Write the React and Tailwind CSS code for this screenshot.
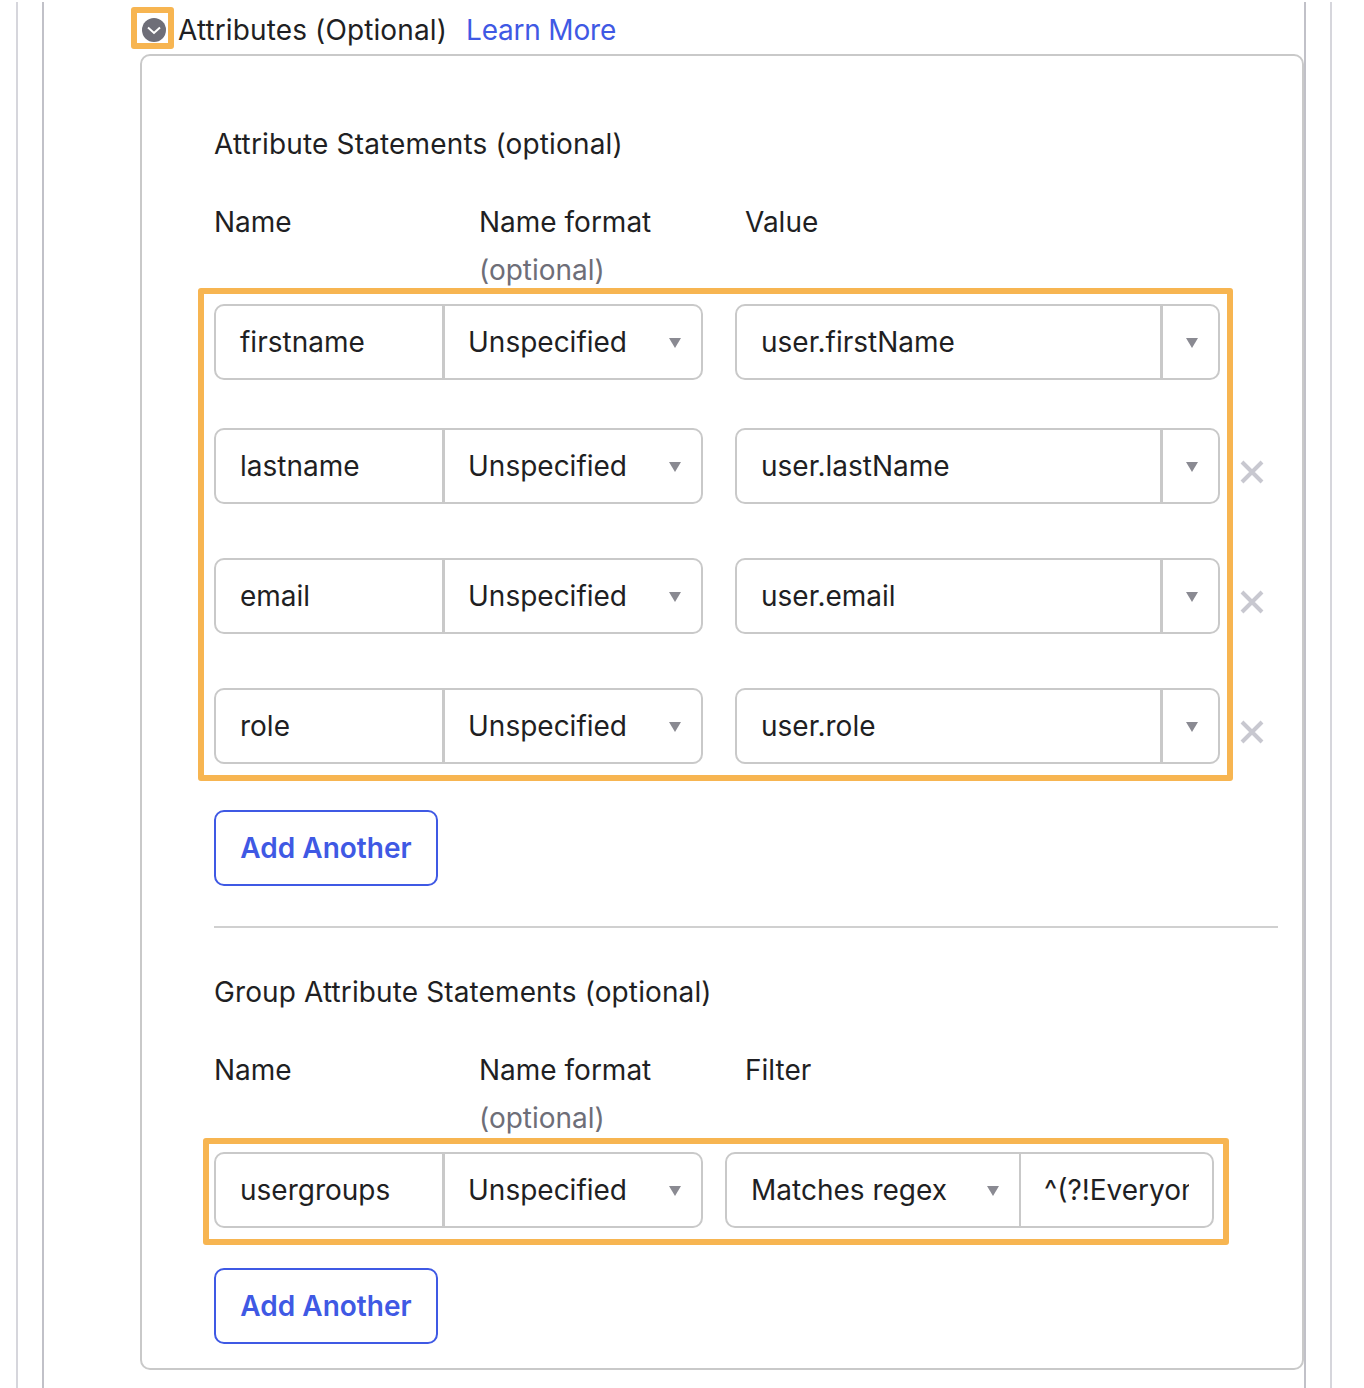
import React from 'react';

const rows = [
    { name: 'firstname', value: 'user.firstName', top: 'mt-0', removable: false },
    { name: 'lastname', value: 'user.lastName', top: 'mt-[48px]', removable: true },
    { name: 'email', value: 'user.email', top: 'mt-[54px]', removable: true },
    { name: 'role', value: 'user.role', top: 'mt-[54px]', removable: true },
];

const Caret = () => (
    <svg width="12" height="10" viewBox="0 0 12 10" className="mt-[2px] shrink-0">
        <path d="M0 0h12L6 10z" fill="#8a8a92" />
    </svg>
);

const Remove = () => (
    <svg width="24" height="24" viewBox="0 0 24 24" className="absolute left-[1026px] top-[32px]">
        <path d="M2 2l20 20M22 2L2 22" stroke="#c8c8d0" strokeWidth="4" fill="none" />
    </svg>
);

const NameAndFormat = ({ name }) => (
    <div className="flex h-[76px] w-[489px] shrink-0 rounded-[10px] border-2 border-[#c9c9c9]">
        <div className="flex w-[229px] shrink-0 items-center pl-6 border-r-[3px] border-[#c9c9c9]">{name}</div>
        <div className="flex flex-1 items-center justify-between pl-[23px] pr-[20px]">
            <span>Unspecified</span>
            <Caret />
        </div>
    </div>
);

const Labels = ({ third }) => (
    <div className="grid grid-cols-[265px_266px_1fr] mt-[34px]">
        <div className="leading-[48px]">Name</div>
        <div className="leading-[48px]">
            Name format
            <div className="text-[#6e6e78]">(optional)</div>
        </div>
        <div className="leading-[48px]">{third}</div>
    </div>
);

const AddAnother = () => (
    <button className="h-[76px] w-[224px] rounded-[10px] border-2 border-[#3f59e4] text-center font-semibold text-[#3f59e4]">
        Add Another
    </button>
);

const App = () => {
    return (
        <div className="h-[1388px] overflow-hidden bg-white pt-[2px] pl-4 pr-[32px] text-[28px] text-[#1f1f23]" style={{ fontFamily: 'Inter, sans-serif' }}>
            <div className="h-[1386px] border-x-2 border-[#d6d6dc] pl-6 pr-6">
                <div className="h-full border-x-2 border-[#c1c1c8] pt-[5px] pl-[87px]">
                    <div className="flex h-[42px] items-center">
                        <div className="h-[42px] w-[43px] shrink-0 rounded-[3px] border-[6px] border-[#f7b551] pl-[5px] pt-[5px]">
                            <svg width="24" height="24" viewBox="0 0 24 24">
                                <circle cx="12" cy="12" r="12" fill="#6e6e78" />
                                <path d="M6 9.5l6 5.5 6-5.5" stroke="#fff" strokeWidth="2" fill="none" />
                            </svg>
                        </div>
                        <span className="ml-[4px] mt-[4px] tracking-[0.12px]">Attributes (Optional)</span>
                        <a className="ml-[19px] mt-[4px] tracking-[-0.2px] text-[#3f59e4]">Learn More</a>
                    </div>

                    <div className="mt-[5px] ml-[9px] h-[1316px] w-[1164px] rounded-[10px] border-2 border-[#c9c9c9] bg-white pt-[68px] pl-[72px] pr-[24px]">
                        <div className="leading-[40px] tracking-[0.16px]">Attribute Statements (optional)</div>
                        <Labels third="Value" />

                        <div className="-mt-[6px] -ml-[16px] w-[1035px] rounded-[3px] border-[6px] border-[#f7b551] pt-[10px] pb-[11px] pl-[10px]">
                            {rows.map((row) => (
                                <div key={row.name} className={`relative flex ${row.top}`}>
                                    <NameAndFormat name={row.name} />
                                    <div className="ml-[32px] flex h-[76px] w-[485px] rounded-[10px] border-2 border-[#c9c9c9]">
                                        <div className="flex w-[426px] shrink-0 items-center pl-6 border-r-[3px] border-[#c9c9c9]">{row.value}</div>
                                        <div className="flex flex-1 items-center justify-center pl-[3px]">
                                            <Caret />
                                        </div>
                                    </div>
                                    {row.removable && <Remove />}
                                </div>
                            ))}
                        </div>

                        <div className="mt-[29px]">
                            <AddAnother />
                        </div>

                        <div className="mt-[40px] h-[2px] bg-[#d0d0d0]" />

                        <div className="mt-[44px] leading-[40px] tracking-[0.12px]">Group Attribute Statements (optional)</div>
                        <Labels third="Filter" />

                        <div className="-mt-[4px] -ml-[11px] w-[1026px] rounded-[3px] border-[6px] border-[#f7b551] pt-[8px] pb-[11px] pl-[5px]">
                            <div className="flex">
                                <NameAndFormat name="usergroups" />
                                <div className="ml-[22px] flex h-[76px] w-[489px] shrink-0 rounded-[10px] border-2 border-[#c9c9c9]">
                                    <div className="flex w-[294px] shrink-0 items-center justify-between whitespace-nowrap border-r-2 border-[#c9c9c9] pl-6 pr-[20px]">
                                        <span>Matches regex</span>
                                        <Caret />
                                    </div>
                                    <div className="flex min-w-0 flex-1 items-center pl-[23px] pr-[23px]">
                                        <span className="overflow-hidden whitespace-nowrap">^(?!Everyone.*)</span>
                                    </div>
                                </div>
                            </div>
                        </div>

                        <div className="mt-[23px]">
                            <AddAnother />
                        </div>
                    </div>
                </div>
            </div>
        </div>
    );
};

export default App;
